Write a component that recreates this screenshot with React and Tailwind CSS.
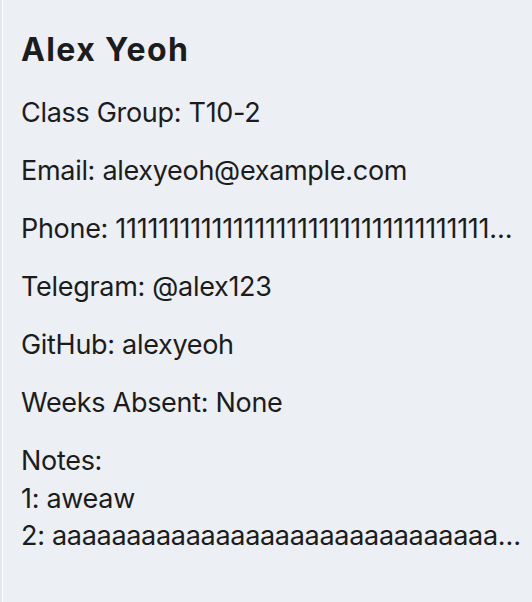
export default function App() {
  const rows = [
    "Class Group: T10-2",
    "Email: alexyeoh@example.com",
    "Phone: " + "1".repeat(40),
    "Telegram: @alex123",
    "GitHub: alexyeoh",
    "Weeks Absent: None",
  ];
  return (
    <div className="w-[532px] h-[602px] bg-[#eceff4] flex overflow-hidden">
      <div className="w-[2px] bg-[#e2e6ee] shrink-0" />
      <div className="w-[1px] bg-white shrink-0" />
      <div
        className="flex-1 min-w-0 pl-[18px] pr-[10px] text-[#1c1c1c]"
        style={{ fontFamily: "Inter, 'Liberation Sans', sans-serif" }}
      >
        <div className="mt-[32px] text-[32px] font-bold leading-[36px] tracking-[1.4px]">
          Alex Yeoh
        </div>
        <div className="mt-[26px] flex flex-col gap-[20px] text-[27px] leading-[38px] tracking-[-0.3px]">
          {rows.map((r) => (
            <div key={r} className="truncate">{r}</div>
          ))}
          <div className="leading-[37.5px]">
            <div>Notes:</div>
            <div>1: aweaw</div>
            <div className="truncate">2: {"a".repeat(60)}</div>
          </div>
        </div>
      </div>
    </div>
  );
}
